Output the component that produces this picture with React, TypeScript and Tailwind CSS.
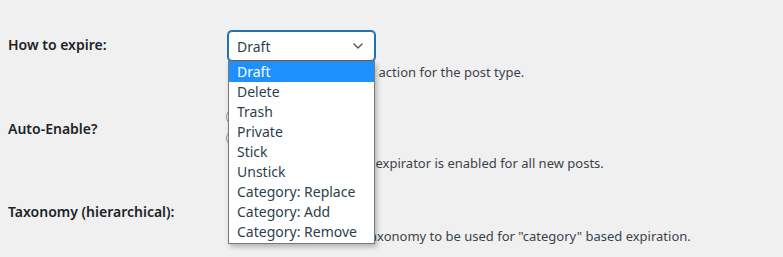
import { ChevronDown } from "lucide-react"

const options = [
  "Draft",
  "Delete",
  "Trash",
  "Private",
  "Stick",
  "Unstick",
  "Category: Replace",
  "Category: Add",
  "Category: Remove",
]

function Label({ children }: { children: React.ReactNode }) {
  return (
    <div className="w-[210px] shrink-0 pt-[20px] pr-[10px] text-[14px] leading-[18px] font-semibold text-[#1d2327]">
      {children}
    </div>
  )
}

function Select({ value, focused, open }: { value: string; focused?: boolean; open?: boolean }) {
  return (
    <div className="relative w-[147px]">
      <div
        className={
          focused
            ? "flex h-[30px] items-center justify-between rounded-[4px] border border-[#2271b1] bg-white pl-[8px] pr-[8px] shadow-[0_0_0_1px_#2271b1] text-[14px] text-[#2c3f4c]"
            : "flex h-[30px] items-center justify-between rounded-[4px] border border-[#8c8f94] bg-white pl-[8px] pr-[8px] text-[14px] text-[#2c3f4c]"
        }
      >
        <span>{value}</span>
        <ChevronDown className="h-[16px] w-[16px] text-[#50575e]" strokeWidth={2} />
      </div>
      {open && (
        <ul className="absolute left-0 top-[30px] z-10 w-[147px] border border-[#7a7a7a] bg-white pb-[1px] shadow-[2px_3px_5px_rgba(0,0,0,0.25)]">
          {options.map((o, i) => (
            <li
              key={o}
              className={
                i === 0
                  ? "h-[20px] pl-[8px] text-[14px] leading-[20px] bg-[#1e90ff] text-white"
                  : "h-[20px] pl-[8px] text-[14px] leading-[20px] text-[#2c3f4c]"
              }
            >
              {o}
            </li>
          ))}
        </ul>
      )}
    </div>
  )
}

function Radio({ text }: { text: string }) {
  return (
    <label className="flex h-[21px] items-center gap-[4px] text-[14px] text-[#2c3338]">
      <span className="-ml-[2px] h-[16px] w-[16px] rounded-full border border-[#8c8f94] bg-white" />
      {text}
    </label>
  )
}

export default function App() {
  return (
    <div
      className="h-[257px] w-full overflow-hidden bg-[#f0f0f1] pl-[8px] pt-[16px]"
      style={{ fontFamily: '"Noto Sans", "Open Sans", sans-serif' }}
    >
      <div className="flex h-[84px]">
        <Label>How to expire:</Label>
        <div className="pt-[15px] pl-[10px]">
          <Select value="Draft" focused open />
          <p className="mt-[1px] text-[13px] leading-[20px] text-[#3c434a]">
            Select the default expire action for the post type.
          </p>
        </div>
      </div>

      <div className="flex h-[83px]">
        <Label>Auto-Enable?</Label>
        <div className="pt-[6px] pl-[10px]">
          <Radio text="Enabled" />
          <Radio text="Disabled" />
          <p className="mt-[5px] text-[13px] leading-[20px] text-[#3c434a]">
            Select whether the post expirator is enabled for all new posts.
          </p>
        </div>
      </div>

      <div className="flex h-[74px]">
        <Label>Taxonomy (hierarchical):</Label>
        <div className="pt-[15px] pl-[10px]">
          <Select value="Category" />
          <p className="mt-0 text-[13px] leading-[17px] text-[#3c434a]">
            Select the hierarchical taxonomy to be used for "category" based expiration.
          </p>
        </div>
      </div>
    </div>
  )
}
